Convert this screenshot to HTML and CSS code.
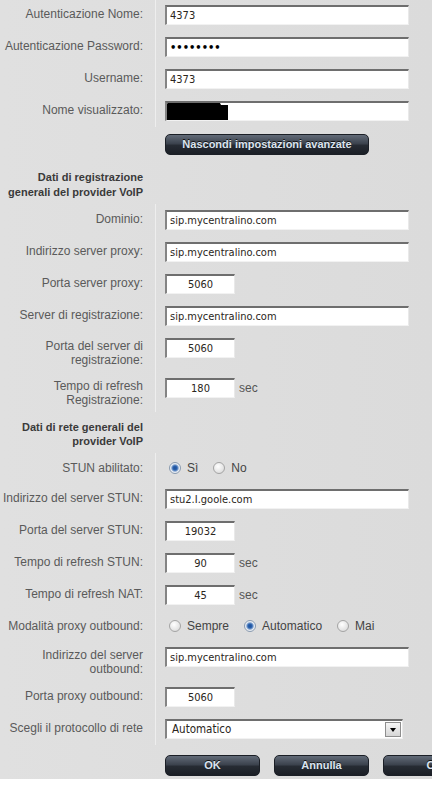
FILE: index.html
```html
<!DOCTYPE html>
<html lang="it">
<head>
<meta charset="utf-8">
<title>Impostazioni VoIP</title>
<link rel="stylesheet" href="styles.css">
</head>
<body>
<div class="panel">
  <div class="section">
    <div class="row first"><div class="label">Autenticazione Nome:</div><div class="value"><div class="field wide">4373</div></div></div>
    <div class="row"><div class="label">Autenticazione Password:</div><div class="value"><div class="field wide pwd">••••••••</div></div></div>
    <div class="row"><div class="label">Username:</div><div class="value"><div class="field wide">4373</div></div></div>
    <div class="row"><div class="label">Nome visualizzato:</div><div class="value"><div class="field wide redacted"><svg class="blob" width="64" height="21" viewBox="0 0 64 21"><path d="M0,3 C6,1 14,0 22,0 L40,0 L46,1 L55,2 L56,4 L63,4 L63,21 L40,21 L30,20 L15,21 L0,21 Z" fill="#000"/></svg></div></div></div>
  </div>
  <div class="actions"><button class="btn long">Nascondi impostazioni avanzate</button></div>

  <div class="heading h-one">Dati di registrazione<br>generali del provider VoIP</div>
  <div class="section">
    <div class="row"><div class="label">Dominio:</div><div class="value"><div class="field wide">sip.mycentralino.com</div></div></div>
    <div class="row"><div class="label">Indirizzo server proxy:</div><div class="value"><div class="field wide">sip.mycentralino.com</div></div></div>
    <div class="row"><div class="label">Porta server proxy:</div><div class="value"><div class="field small">5060</div></div></div>
    <div class="row"><div class="label">Server di registrazione:</div><div class="value"><div class="field wide">sip.mycentralino.com</div></div></div>
    <div class="row two"><div class="label">Porta del server di<br>registrazione:</div><div class="value"><div class="field small">5060</div></div></div>
    <div class="row two"><div class="label">Tempo di refresh<br>Registrazione:</div><div class="value"><div class="field small">180</div><span class="unit">sec</span></div></div>
  </div>

  <div class="heading h-two">Dati di rete generali del<br>provider VoIP</div>
  <div class="section">
    <div class="row radio"><div class="label">STUN abilitato:</div><div class="value"><div class="radios"><span class="opt"><span class="dot on"></span>Sì</span><span class="opt"><span class="dot"></span>No</span></div></div></div>
    <div class="row"><div class="label">Indirizzo del server STUN:</div><div class="value"><div class="field wide">stu2.I.goole.com</div></div></div>
    <div class="row"><div class="label">Porta del server STUN:</div><div class="value"><div class="field small">19032</div></div></div>
    <div class="row"><div class="label">Tempo di refresh STUN:</div><div class="value"><div class="field small">90</div><span class="unit">sec</span></div></div>
    <div class="row"><div class="label">Tempo di refresh NAT:</div><div class="value"><div class="field small">45</div><span class="unit">sec</span></div></div>
    <div class="row radio"><div class="label">Modalità proxy outbound:</div><div class="value"><div class="radios"><span class="opt"><span class="dot"></span>Sempre</span><span class="opt"><span class="dot on"></span>Automatico</span><span class="opt"><span class="dot"></span>Mai</span></div></div></div>
    <div class="row two"><div class="label">Indirizzo del server<br>outbound:</div><div class="value"><div class="field wide">sip.mycentralino.com</div></div></div>
    <div class="row"><div class="label">Porta proxy outbound:</div><div class="value"><div class="field small">5060</div></div></div>
    <div class="row"><div class="label">Scegli il protocollo di rete</div><div class="value"><div class="field select"><span class="sel-text">Automatico</span><span class="arrow"><span class="tri"></span></span></div></div></div>
  </div>

  <div class="actions bottom">
    <button class="btn">OK</button>
    <button class="btn">Annulla</button>
    <button class="btn wide-btn">Cancella</button>
  </div>
</div>
</body>
</html>
```
FILE: styles.css
```css
html, body {
  margin: 0;
  padding: 0;
}
body {
  background: #ffffff;
  overflow: hidden;
  font-family: "Liberation Sans", Arial, sans-serif;
}
.panel {
  background: linear-gradient(90deg, #e0e0e0 0%, #dbdbdb 100%);
  padding-bottom: 3px;
}
.row {
  display: grid;
  grid-template-columns: 155px 1fr;
}
.label {
  padding: 8px 12px 4px 0;
  text-align: right;
  font-size: 12px;
  line-height: 14px;
  color: #5a5a5a;
  white-space: nowrap;
}
.row.two .label {
  padding-top: 7px;
  padding-bottom: 5px;
}
.value {
  border-left: 1px solid #eeeeee;
  padding: 6px 0 6px 9px;
  display: flex;
  align-items: center;
  gap: 4px;
}
.row.two .value {
  align-items: flex-start;
}
.row.first .value {
  padding-top: 5px;
}
.row.first .label {
  padding-top: 7px;
}
.row.radio .value {
  padding-top: 5px;
  padding-bottom: 5px;
}
.row.radio .label {
  padding-top: 8px;
  padding-bottom: 2px;
}
.field {
  box-sizing: border-box;
  height: 20px;
  background: #ffffff;
  border-top: 2px solid #6e6e6e;
  border-left: 2px solid #848484;
  border-right: 1px solid #e9e9e9;
  border-bottom: 1px solid #f2f2f2;
  padding: 0 3px;
  font-family: "DejaVu Sans Condensed", "DejaVu Sans", sans-serif;
  font-size: 11px;
  line-height: 17px;
  color: #2a2520;
  white-space: nowrap;
  overflow: hidden;
  flex: none;
}
.field.wide {
  width: 244px;
}
.field.small {
  width: 70px;
  text-align: center;
}
.field.pwd {
  font-weight: bold;
  color: #000;
}
.field.redacted {
  position: relative;
}
.blob {
  position: absolute;
  left: -2px;
  top: -2px;
}
.field.select {
  width: 238px;
  display: flex;
  align-items: center;
  justify-content: space-between;
  padding: 0 1px 0 5px;
}
.sel-text {
  font-size: 11.5px;
}
.arrow {
  box-sizing: border-box;
  width: 16px;
  height: 15px;
  border: 1px solid #8e8e8e;
  background: linear-gradient(#f6f6f6, #d6d6d6);
  display: flex;
  align-items: center;
  justify-content: center;
}
.tri {
  width: 0;
  height: 0;
  border-left: 3.5px solid transparent;
  border-right: 3.5px solid transparent;
  border-top: 4px solid #000;
}
.unit {
  font-size: 12px;
  line-height: 20px;
  color: #555;
}
.heading {
  box-sizing: border-box;
  width: 155px;
  text-align: right;
  font-weight: bold;
  font-size: 11px;
  color: #3a3a3a;
  white-space: nowrap;
}
.h-one {
  padding: 10px 12px 4px 0;
  line-height: 15px;
}
.h-two {
  padding: 8px 12px 5px 0;
  line-height: 14px;
}
.radios {
  height: 20px;
  display: flex;
  align-items: center;
  padding-left: 4px;
}
.opt {
  display: inline-flex;
  align-items: center;
  margin-right: 15px;
  font-size: 12px;
  color: #444;
}
.dot {
  box-sizing: border-box;
  width: 12px;
  height: 12px;
  border-radius: 50%;
  border: 1px solid #a4a4a4;
  background: radial-gradient(circle at 40% 35%, #ffffff, #d4d4d4);
  margin-right: 6px;
}
.dot.on {
  border-color: #8a9bb0;
  background: radial-gradient(circle, #1d4f96 0, #2a62b0 2px, #7fa0cc 3.2px, #e6ecf4 4.2px, #f2f2f2 6px);
}
.actions {
  padding: 7px 0 5px 165px;
  display: flex;
  gap: 14px;
}
.actions.bottom {
  padding: 10px 0 0 165px;
  white-space: nowrap;
}
.btn {
  box-sizing: border-box;
  flex: none;
  width: 95px;
  height: 21px;
  border: 1px solid #1b1f26;
  border-radius: 5px;
  background: linear-gradient(#626b78 0%, #3c434e 45%, #262b33 55%, #1b1f26 100%);
  color: #dbe4ef;
  font-family: "Liberation Sans", Arial, sans-serif;
  font-weight: bold;
  font-size: 11px;
  line-height: 19px;
  padding: 0;
  text-align: center;
  text-shadow: 0 -1px 0 #111;
}
.btn.long {
  width: 204px;
}
.btn.wide-btn {
  width: 132px;
}
```
